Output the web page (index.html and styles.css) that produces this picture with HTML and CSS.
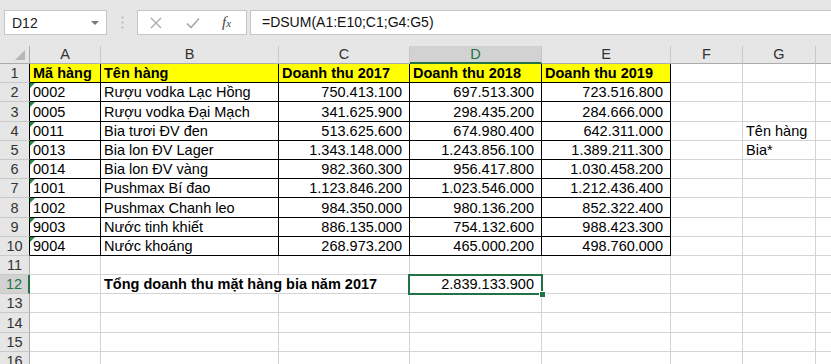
FILE: index.html
```html
<!DOCTYPE html>
<html lang="vi">
<head>
  <meta charset="UTF-8" />
  <meta name="viewport" content="width=device-width, initial-scale=1.0"/>
  <title>Doanh thu</title>
  <link rel="stylesheet" href="styles.css">
</head>
<body>
  <div class="formula-bar">
    <div class="name-box">
      <span>D12</span>
      <span class="caret"></span>
    </div>
    <div class="grip">
      <svg width="3" height="13" viewBox="0 0 3 13"><circle cx="1.5" cy="1.5" r="1" fill="#b4b4b4"/><circle cx="1.5" cy="6.5" r="1" fill="#b4b4b4"/><circle cx="1.5" cy="11.5" r="1" fill="#b4b4b4"/></svg>
    </div>
    <div class="fx-buttons">
      <svg class="btn-cancel" width="12" height="12" viewBox="0 0 12 12"><path d="M1 1 L11 11 M11 1 L1 11" stroke="#a8a8a8" stroke-width="1.3" fill="none"/></svg>
      <svg class="btn-enter" width="14" height="12" viewBox="0 0 14 12"><path d="M1 6.5 L5 10.5 L13 1.5" stroke="#a8a8a8" stroke-width="1.6" fill="none"/></svg>
      <span class="fx">f<i>x</i></span>
    </div>
    <div class="formula-input">=DSUM(A1:E10;C1;G4:G5)</div>
  </div>

  <div class="sheet-wrap">
    <div class="sheet" id="sheet"></div>
  </div>

  <script>
    const cols = ['A', 'B', 'C', 'D', 'E', 'F', 'G', ''];
    const data = {
      1: ['Mã hàng', 'Tên hàng', 'Doanh thu 2017', 'Doanh thu 2018', 'Doanh thu 2019'],
      2: ['0002', 'Rượu vodka Lạc Hồng', '750.413.100', '697.513.300', '723.516.800'],
      3: ['0005', 'Rượu vodka Đại Mạch', '341.625.900', '298.435.200', '284.666.000'],
      4: ['0011', 'Bia tươi ĐV đen', '513.625.600', '674.980.400', '642.311.000', '', 'Tên hàng'],
      5: ['0013', 'Bia lon ĐV Lager', '1.343.148.000', '1.243.856.100', '1.389.211.300', '', 'Bia*'],
      6: ['0014', 'Bia lon ĐV vàng', '982.360.300', '956.417.800', '1.030.458.200'],
      7: ['1001', 'Pushmax Bí đao', '1.123.846.200', '1.023.546.000', '1.212.436.400'],
      8: ['1002', 'Pushmax Chanh leo', '984.350.000', '980.136.200', '852.322.400'],
      9: ['9003', 'Nước tinh khiết', '886.135.000', '754.132.600', '988.423.300'],
      10: ['9004', 'Nước khoáng', '268.973.200', '465.000.200', '498.760.000'],
      12: ['', 'Tổng doanh thu mặt hàng bia năm 2017', '', '2.839.133.900']
    };

    function renderSheet() {
      const sheet = document.getElementById('sheet');
      let html = '<div class="corner"><span class="select-all"></span></div>';
      cols.forEach(c => {
        html += `<div class="col-head${c === 'D' ? ' selected' : ''}">${c}</div>`;
      });
      for (let r = 1; r <= 17; r++) {
        const cls = ['row-head'];
        if (r <= 10) cls.push('edge');
        if (r === 12) cls.push('selected');
        html += `<div class="${cls.join(' ')}">${r}</div>`;
        const values = data[r] || [];
        cols.forEach((c, i) => {
          const cell = ['cell'];
          if (r <= 10 && i < 5) cell.push('boxed');
          if (r === 1 && i < 5) cell.push('head');
          if (r > 1 && i >= 2 && i <= 4) cell.push('num');
          if (r > 1 && r <= 10 && i === 0) cell.push('flag');
          if (r === 12 && i === 1) cell.push('title');
          const active = r === 12 && c === 'D';
          if (active) cell.push('active');
          html += `<div class="${cell.join(' ')}">${values[i] || ''}${active ? '<span class="selection"></span>' : ''}</div>`;
        });
      }
      sheet.innerHTML = html;
    }

    renderSheet();
  </script>
</body>
</html>
```

FILE: styles.css
```css
:root {
  --grid-line: #d4d4d4;
  --head-bg: #e6e6e6;
  --head-line: #ababab;
  --excel-green: #217346;
}

body {
  margin: 0;
  background-color: #e6e6e6;
  font-family: "Liberation Sans", Arial, sans-serif;
  overflow: hidden;
}

/* formula bar */
.formula-bar {
  display: flex;
  align-items: center;
  height: 25px;
  padding: 10px 0 11px 4px;
}

.name-box {
  width: 103px;
  height: 25px;
  box-sizing: border-box;
  border: 1px solid #c6c6c6;
  background: #fff;
  display: flex;
  align-items: center;
  justify-content: space-between;
  padding: 0 7px 0 7px;
  font-size: 14px;
  color: #222;
}

.caret {
  width: 0;
  height: 0;
  border-left: 4px solid transparent;
  border-right: 4px solid transparent;
  border-top: 4px solid #7a7a7a;
}

.grip {
  width: 30px;
  display: flex;
  justify-content: center;
  align-items: center;
}

.fx-buttons {
  width: 110px;
  height: 25px;
  box-sizing: border-box;
  border: 1px solid #c6c6c6;
  background: #fff;
  margin-right: 3px;
  display: flex;
  align-items: center;
  padding-left: 12px;
}

.btn-cancel {
  margin-right: 24px;
}

.btn-enter {
  margin-right: 22px;
}

.fx {
  font-family: "Liberation Serif", "Times New Roman", serif;
  font-style: italic;
  font-size: 15px;
  color: #444;
}

.fx i {
  font-size: 11px;
}

.formula-input {
  flex: 1;
  height: 25px;
  box-sizing: border-box;
  border: 1px solid #c6c6c6;
  border-right: none;
  background: #fff;
  padding-left: 11px;
  font-size: 14px;
  line-height: 23px;
  color: #111;
}

/* sheet grid */
.sheet-wrap {
  height: 318px;
  overflow: hidden;
  background: #fff;
}

.sheet {
  display: grid;
  grid-template-columns: 30px 71px 178px 131px 132px 129px 72px 73px 72px;
  grid-template-rows: 18px;
  grid-auto-rows: 19.2px;
  width: 888px;
  font-size: 14.5px;
}

.corner {
  background: var(--head-bg);
  border-right: 1px solid var(--head-line);
  border-bottom: 1px solid var(--head-line);
  display: flex;
  justify-content: flex-end;
  align-items: flex-end;
  padding: 0 4px 3px 0;
}

.select-all {
  width: 0;
  height: 0;
  border-left: 10px solid transparent;
  border-bottom: 10px solid #b6b6b6;
}

.col-head {
  background: var(--head-bg);
  border-right: 1px solid #c8c8c8;
  border-bottom: 1px solid var(--head-line);
  text-align: center;
  line-height: 17px;
  font-size: 14.5px;
  color: #333;
}

.col-head.selected {
  background: #d2d2d2;
  color: var(--excel-green);
  border-bottom: 2px solid var(--excel-green);
}

.row-head {
  background: var(--head-bg);
  border-right: 1px solid var(--head-line);
  border-bottom: 1px solid #c8c8c8;
  display: flex;
  justify-content: center;
  align-items: flex-end;
  line-height: 18px;
  color: #333;
}

.row-head.edge {
  border-right-color: #000;
}

.row-head.selected {
  background: #d2d2d2;
  color: var(--excel-green);
  border-right: 2px solid var(--excel-green);
}

.cell {
  position: relative;
  border-right: 1px solid var(--grid-line);
  border-bottom: 1px solid var(--grid-line);
  display: flex;
  align-items: flex-end;
  padding: 0 3px;
  line-height: 18px;
  white-space: nowrap;
  color: #000;
}

.cell.boxed {
  border-right-color: #000;
  border-bottom-color: #000;
}

.cell.head {
  background: #ffff00;
  font-weight: bold;
}

.cell.num {
  justify-content: flex-end;
  padding-right: 7px;
}

.cell.flag::before {
  content: '';
  position: absolute;
  top: 0;
  left: 0;
  border-top: 5px solid #1e8a3e;
  border-right: 5px solid transparent;
}

.cell.title {
  font-weight: bold;
  border-right-color: transparent;
}

.cell.active {
  z-index: 2;
}

.selection {
  position: absolute;
  top: -1px;
  left: -2px;
  right: -2px;
  bottom: -2px;
  border: 2px solid var(--excel-green);
}

.selection::after {
  content: '';
  position: absolute;
  right: -5px;
  bottom: -5px;
  width: 5px;
  height: 5px;
  background: var(--excel-green);
  border: 1px solid #fff;
}
```
